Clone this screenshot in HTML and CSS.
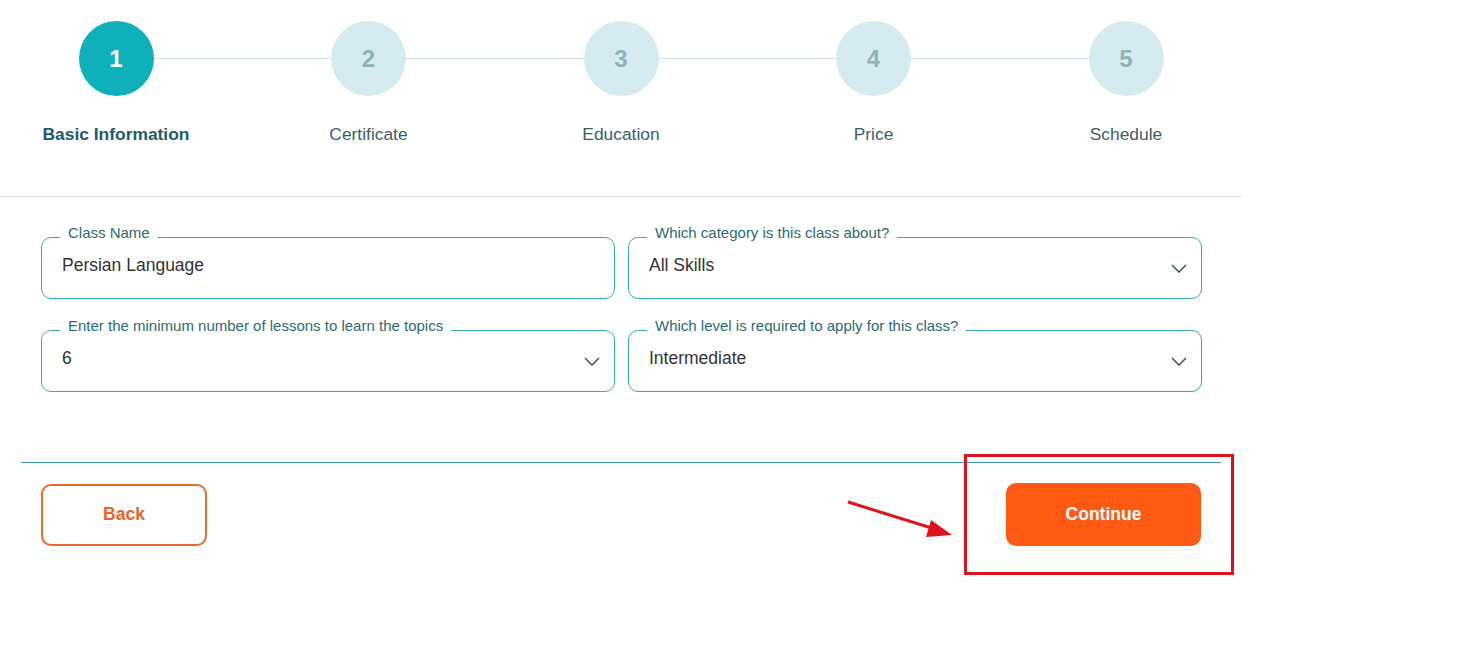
FILE: index.html
```html
<!DOCTYPE html>
<html lang="en">
<head>
  <meta charset="UTF-8" />
  <meta name="viewport" content="width=device-width, initial-scale=1" />
  <title>Create Class</title>
  <link rel="stylesheet" href="styles.css">
</head>
<body>
  <div class="wizard">
    <div class="stepper">
      <div class="step active">
        <div class="step-circle">1</div>
        <div class="step-label">Basic Information</div>
      </div>
      <div class="step">
        <div class="step-circle">2</div>
        <div class="step-label">Certificate</div>
      </div>
      <div class="step">
        <div class="step-circle">3</div>
        <div class="step-label">Education</div>
      </div>
      <div class="step">
        <div class="step-circle">4</div>
        <div class="step-label">Price</div>
      </div>
      <div class="step">
        <div class="step-circle">5</div>
        <div class="step-label">Schedule</div>
      </div>
    </div>

    <form class="class-form">
      <fieldset class="field">
        <legend>Class Name</legend>
        <div class="field-value">Persian Language</div>
      </fieldset>
      <fieldset class="field">
        <legend>Which category is this class about?</legend>
        <div class="field-value">All Skills
          <svg class="chevron" width="16" height="9" viewBox="0 0 16 9"><path d="M1 1l7 7 7-7" fill="none" stroke="#3f5a62" stroke-width="1.6"/></svg>
        </div>
      </fieldset>
      <fieldset class="field">
        <legend>Enter the minimum number of lessons to learn the topics</legend>
        <div class="field-value">6
          <svg class="chevron" width="16" height="9" viewBox="0 0 16 9"><path d="M1 1l7 7 7-7" fill="none" stroke="#3f5a62" stroke-width="1.6"/></svg>
        </div>
      </fieldset>
      <fieldset class="field">
        <legend>Which level is required to apply for this class?</legend>
        <div class="field-value">Intermediate
          <svg class="chevron" width="16" height="9" viewBox="0 0 16 9"><path d="M1 1l7 7 7-7" fill="none" stroke="#3f5a62" stroke-width="1.6"/></svg>
        </div>
      </fieldset>
    </form>

    <div class="actions">
      <button class="btn-back" type="button">Back</button>
      <button class="btn-continue" type="button">Continue</button>
    </div>

    <div class="highlight-box"></div>
    <svg class="highlight-arrow" width="120" height="50" viewBox="0 0 120 50">
      <path d="M2 2L92 30" stroke="#e0121b" stroke-width="3" fill="none"/>
      <path d="M106 35L85 20L80 37Z" fill="#e0121b"/>
    </svg>
  </div>
</body>
</html>
```

FILE: styles.css
```css
body {
  margin: 0;
  font-family: 'Liberation Sans', Arial, sans-serif;
  background: #fff;
  color: #333;
}

.wizard {
  width: 1242px;
  padding-bottom: 80px;
  position: relative;
}

/* stepper */
.stepper {
  display: flex;
  justify-content: space-between;
  width: 1210px;
  padding: 21px 16px 0 16px;
  height: 175px;
  border-bottom: 1px solid #dde7ea;
  position: relative;
}

.stepper::before {
  content: '';
  position: absolute;
  top: 58px;
  left: 116px;
  right: 116px;
  height: 1px;
  background: #cfe2e6;
}

.step {
  width: 200px;
  display: flex;
  flex-direction: column;
  align-items: center;
  position: relative;
}

.step-circle {
  width: 75px;
  height: 75px;
  border-radius: 50%;
  background: #d5ebef;
  color: #8fb2b9;
  font-size: 24px;
  font-weight: bold;
  display: flex;
  align-items: center;
  justify-content: center;
}

.step-label {
  margin-top: 28px;
  font-size: 17.4px;
  color: #3e5e67;
}

.step.active .step-circle {
  background: #0fb0b9;
  color: #fff;
}

.step.active .step-label {
  font-weight: bold;
  color: #1e5a66;
}

/* form */
.class-form {
  display: grid;
  grid-template-columns: 574px 574px;
  column-gap: 13px;
  row-gap: 19px;
  padding: 28px 41px 0;
}

.field {
  margin: 0;
  padding: 0 14px 0 20px;
  border: 1px solid #3aa8a6;
  border-radius: 10px;
  min-width: 0;
}

.field legend {
  font-size: 15px;
  line-height: 16px;
  color: #2f6a6e;
  padding: 0 8px 8px;
  margin-left: -2px;
}

.field-value {
  display: flex;
  align-items: center;
  justify-content: space-between;
  font-size: 17.5px;
  line-height: 20px;
  color: #333;
  margin-top: 6px;
  padding-bottom: 23px;
}

.chevron {
  margin-top: 7px;
}

/* actions */
.actions {
  display: flex;
  justify-content: space-between;
  align-items: center;
  margin: 70px 21px 0;
  padding: 20px 20px 0;
  border-top: 1px solid #3b9aa6;
}

.btn-back,
.btn-continue {
  font-family: 'Liberation Sans', Arial, sans-serif;
  font-size: 17.5px;
  font-weight: bold;
  border-radius: 10px;
  cursor: pointer;
}

.btn-back {
  width: 166px;
  height: 62px;
  background: #fff;
  color: #e8652a;
  border: 2px solid #e8692e;
}

.btn-continue {
  width: 195px;
  height: 63px;
  background: #ff5a14;
  color: #fff;
  border: none;
}

/* annotation */
.highlight-box {
  position: absolute;
  left: 964px;
  top: 454px;
  width: 264px;
  height: 115px;
  border: 3px solid #d8141c;
}

.highlight-arrow {
  position: absolute;
  left: 846px;
  top: 500px;
}
```
